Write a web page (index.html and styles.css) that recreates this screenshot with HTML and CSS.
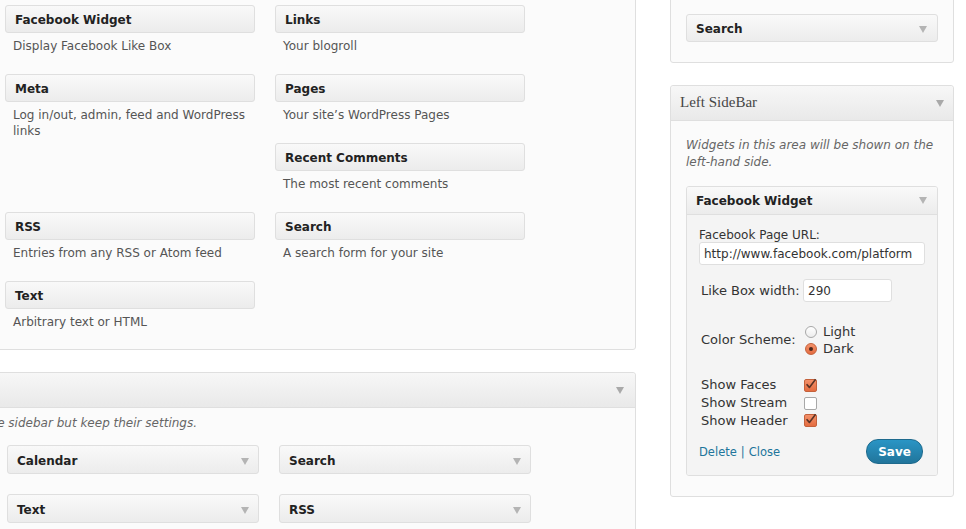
FILE: index.html
```html
<!DOCTYPE html>
<html lang="en">
<head>
<meta charset="utf-8">
<title>Widgets</title>
<link rel="stylesheet" href="styles.css">
</head>
<body>
<div class="page">
  <div class="col-left">
    <section class="panel avail">
      <div class="avail-grid">
        <div class="item"><div class="wtop"><h4>Facebook Widget</h4></div><p class="wdesc">Display Facebook Like Box</p></div>
        <div class="item"><div class="wtop"><h4>Links</h4></div><p class="wdesc">Your blogroll</p></div>
        <div class="item"><div class="wtop"><h4>Meta</h4></div><p class="wdesc">Log in/out, admin, feed and WordPress links</p></div>
        <div class="item"><div class="wtop"><h4>Pages</h4></div><p class="wdesc">Your site’s WordPress Pages</p></div>
        <div class="item empty"></div>
        <div class="item"><div class="wtop"><h4>Recent Comments</h4></div><p class="wdesc">The most recent comments</p></div>
        <div class="item"><div class="wtop"><h4>RSS</h4></div><p class="wdesc">Entries from any RSS or Atom feed</p></div>
        <div class="item"><div class="wtop"><h4>Search</h4></div><p class="wdesc">A search form for your site</p></div>
        <div class="item"><div class="wtop"><h4>Text</h4></div><p class="wdesc">Arbitrary text or HTML</p></div>
      </div>
    </section>

    <section class="panel inactive">
      <div class="sidebar-name inactive-name"><h3 class="hidden-title"></h3><span class="arrow"></span></div>
      <div class="inactive-body">
        <div class="clipdesc"><p>Drag widgets here to remove them from the sidebar but keep their settings.</p></div>
        <div class="inactive-grid">
          <div class="wtop"><h4>Calendar</h4><span class="arrow light"></span></div>
          <div class="wtop"><h4>Search</h4><span class="arrow light"></span></div>
          <div class="wtop"><h4>Text</h4><span class="arrow light"></span></div>
          <div class="wtop"><h4>RSS</h4><span class="arrow light"></span></div>
        </div>
      </div>
    </section>
  </div>

  <div class="col-right">
    <section class="panel side1">
      <div class="wtop"><h4>Search</h4><span class="arrow light"></span></div>
    </section>

    <section class="panel side2">
      <div class="sidebar-name side-name"><h3>Left SideBar</h3><span class="arrow"></span></div>
      <div class="sb-body">
        <p class="sb-desc">Widgets in this area will be shown on the left-hand side.</p>
        <div class="widget-open">
          <div class="wtop open-top"><h4>Facebook Widget</h4><span class="arrow light"></span></div>
          <div class="winside">
            <label class="lbl-block">Facebook Page URL:</label>
            <input class="txt url" type="text" value="http://www.facebook.com/platform">

            <div class="frow r-width">
              <span class="flabel">Like Box width:</span>
              <input class="txt small" type="text" value="290">
            </div>

            <div class="frow r-color">
              <span class="flabel">Color Scheme:</span>
              <div class="radios">
                <div class="ropt"><span class="radio"></span><span>Light</span></div>
                <div class="ropt"><span class="radio on"></span><span>Dark</span></div>
              </div>
            </div>

            <div class="checks">
              <div class="frow crow">
                <span class="flabel">Show Faces</span>
                <span class="cb on"><svg viewBox="0 0 13 13" width="13" height="13"><path d="M2.6 6.2 L5.4 9.4 L11.6 1.2"/></svg></span>
              </div>
              <div class="frow crow">
                <span class="flabel">Show Stream</span>
                <span class="cb"></span>
              </div>
              <div class="frow crow">
                <span class="flabel">Show Header</span>
                <span class="cb on"><svg viewBox="0 0 13 13" width="13" height="13"><path d="M2.6 6.2 L5.4 9.4 L11.6 1.2"/></svg></span>
              </div>
            </div>

            <div class="actions">
              <div class="links"><a href="#">Delete</a><span class="pipe">|</span><a href="#">Close</a></div>
              <button class="save" type="button">Save</button>
            </div>
          </div>
        </div>
      </div>
    </section>
  </div>
</div>
</body>
</html>
```

FILE: styles.css
```css
html, body {
  margin: 0;
  padding: 0;
}

body {
  width: 966px;
  height: 529px;
  overflow: hidden;
  background: #ffffff;
  font-family: "DejaVu Sans", sans-serif;
  font-size: 12px;
  line-height: 16px;
  color: #333333;
}

.page {
  display: flex;
  align-items: flex-start;
  margin-top: -10px;
}

.col-left {
  flex: none;
  width: 646px;
  margin-left: -10px;
}

.col-right {
  flex: none;
  width: 284px;
  margin-left: 34px;
}

.panel {
  background: #fbfbfb;
  border: 1px solid #dfdfdf;
  border-radius: 3px;
}

/* available widgets */
.avail {
  padding: 14px 0 0 14px;
}

.avail-grid {
  display: grid;
  grid-template-columns: 250px 250px;
  grid-template-rows: repeat(4, 69px) 68px;
  column-gap: 20px;
}

.wtop {
  box-sizing: border-box;
  height: 28px;
  border: 1px solid #dfdfdf;
  border-radius: 3px;
  background: linear-gradient(#f9f9f9, #ececec);
  display: flex;
  align-items: center;
  justify-content: space-between;
  padding: 2px 9px 0 9px;
}

h4 {
  margin: 0;
  font-size: 12px;
  font-weight: bold;
  line-height: 16px;
  color: #222222;
}

.wdesc {
  margin: 5px 0 0;
  padding-left: 8px;
  color: #555555;
  line-height: 16px;
}

.arrow {
  width: 0;
  height: 0;
  border-left: 4px solid transparent;
  border-right: 4px solid transparent;
  border-top: 7px solid #a9a9a9;
}

.arrow.light {
  border-top-color: #b4b4b4;
}

/* inactive */
.inactive {
  margin-top: 22px;
  padding-bottom: 20px;
}

.sidebar-name {
  display: flex;
  align-items: center;
  justify-content: space-between;
  border-bottom: 1px solid #dfdfdf;
  background: linear-gradient(#f7f7f7, #e9e9e9);
  border-radius: 3px 3px 0 0;
}

.inactive-name {
  height: 34px;
  padding: 0 11px 0 9px;
}

.hidden-title {
  margin: 0;
}

.inactive-body {
  padding: 7px 0 0 16px;
}

.clipdesc {
  width: 190px;
  display: flex;
  justify-content: flex-end;
}

.clipdesc p {
  margin: 0;
  white-space: nowrap;
  font-style: italic;
  color: #666666;
  line-height: 16px;
}

.inactive-grid {
  margin-top: 14px;
  display: grid;
  grid-template-columns: 252px 252px;
  grid-auto-rows: 29px;
  column-gap: 20px;
  row-gap: 20px;
}

.inactive-grid .wtop {
  height: 29px;
  padding-top: 3px;
  padding-right: 9px;
}

/* right side */
.side1 {
  padding: 23px 15px 20px;
}

.side1 .wtop {
  padding-right: 10px;
}

.side2 {
  margin-top: 22px;
}

.side-name {
  height: 34px;
  padding: 0 9px 0 9px;
  box-sizing: content-box;
}

.side-name h3 {
  margin: 0 0 2px;
  font-family: "Liberation Serif", "Times New Roman", serif;
  font-size: 15px;
  font-weight: normal;
  color: #464646;
  line-height: 18px;
}

.sb-body {
  padding: 0 15px 20px;
}

.sb-desc {
  margin: 16px 0 15px;
  line-height: 17px;
  font-style: italic;
  color: #666666;
}

.widget-open {
  border: 1px solid #dfdfdf;
  border-radius: 3px;
  overflow: hidden;
}

.open-top {
  border: none;
  border-bottom: 1px solid #dfdfdf;
  border-radius: 0;
  padding: 0 10px 0 9px;
}

.winside {
  background: #f4f4f4;
  padding: 12px 13px 11px 12px;
}

.lbl-block {
  display: block;
  line-height: 15px;
  padding-top: 1px;
  margin-bottom: -1px;
  color: #333333;
}

.txt {
  box-sizing: border-box;
  height: 23px;
  margin: 0;
  border: 1px solid #dfdfdf;
  border-radius: 3px;
  background: #ffffff;
  padding: 0 4px;
  font-family: "DejaVu Sans", sans-serif;
  font-size: 12px;
  color: #333333;
  outline: none;
}

.url {
  display: block;
  width: 226px;
}

.small {
  width: 89px;
}

.frow {
  display: grid;
  grid-template-columns: 102px auto;
  align-items: center;
  justify-items: start;
  padding-left: 2px;
  font-size: 13px;
}

.flabel {
  color: #333333;
}

.r-width {
  margin-top: 14px;
}

.r-color {
  margin-top: 21px;
}

.radios {
  display: flex;
  flex-direction: column;
}

.ropt {
  display: flex;
  align-items: center;
  gap: 6px;
  height: 17px;
  padding-left: 2px;
  color: #333333;
}

.radio {
  box-sizing: border-box;
  width: 12px;
  height: 12px;
  margin-top: 1px;
  border-radius: 50%;
  border: 1px solid #a8a8a8;
  background: linear-gradient(#ffffff, #ececec);
  display: flex;
  align-items: center;
  justify-content: center;
}

.radio.on {
  border-color: #c4613b;
  background: linear-gradient(#f3916a, #e46c40);
}

.radio.on::after {
  content: "";
  width: 4px;
  height: 4px;
  border-radius: 50%;
  background: #4b261a;
}

.checks {
  margin-top: 19px;
}

.crow {
  height: 18px;
}

.checks .crow:last-child {
  height: 17px;
}

.cb {
  box-sizing: border-box;
  width: 13px;
  height: 13px;
  margin-left: 1px;
  border: 1px solid #a8a8a8;
  border-radius: 2px;
  background: #ffffff;
  position: relative;
}

.cb.on {
  border-color: #c4613b;
  background: linear-gradient(#f3916a, #e46c40);
}

.cb svg {
  position: absolute;
  left: -1px;
  top: -2px;
  overflow: visible;
}

.cb svg path {
  fill: none;
  stroke: #5a3326;
  stroke-width: 1.6;
  stroke-linejoin: round;
}

.actions {
  margin-top: 10px;
  display: flex;
  align-items: center;
  justify-content: space-between;
}

.links {
  display: flex;
  align-items: center;
  font-size: 11.5px;
  color: #21759b;
}

.links a {
  color: #21759b;
  text-decoration: none;
}

.pipe {
  color: #21759b;
  margin: 0 4px;
}

.save {
  box-sizing: border-box;
  width: 57px;
  height: 25px;
  margin: 0 1px 0 0;
  padding: 0;
  border: 1px solid #1e6a8d;
  border-radius: 12px;
  background: linear-gradient(#2a95c5, #21759b);
  color: #ffffff;
  font-family: "DejaVu Sans", sans-serif;
  font-size: 12px;
  font-weight: bold;
  line-height: 22px;
  text-align: center;
}
```
